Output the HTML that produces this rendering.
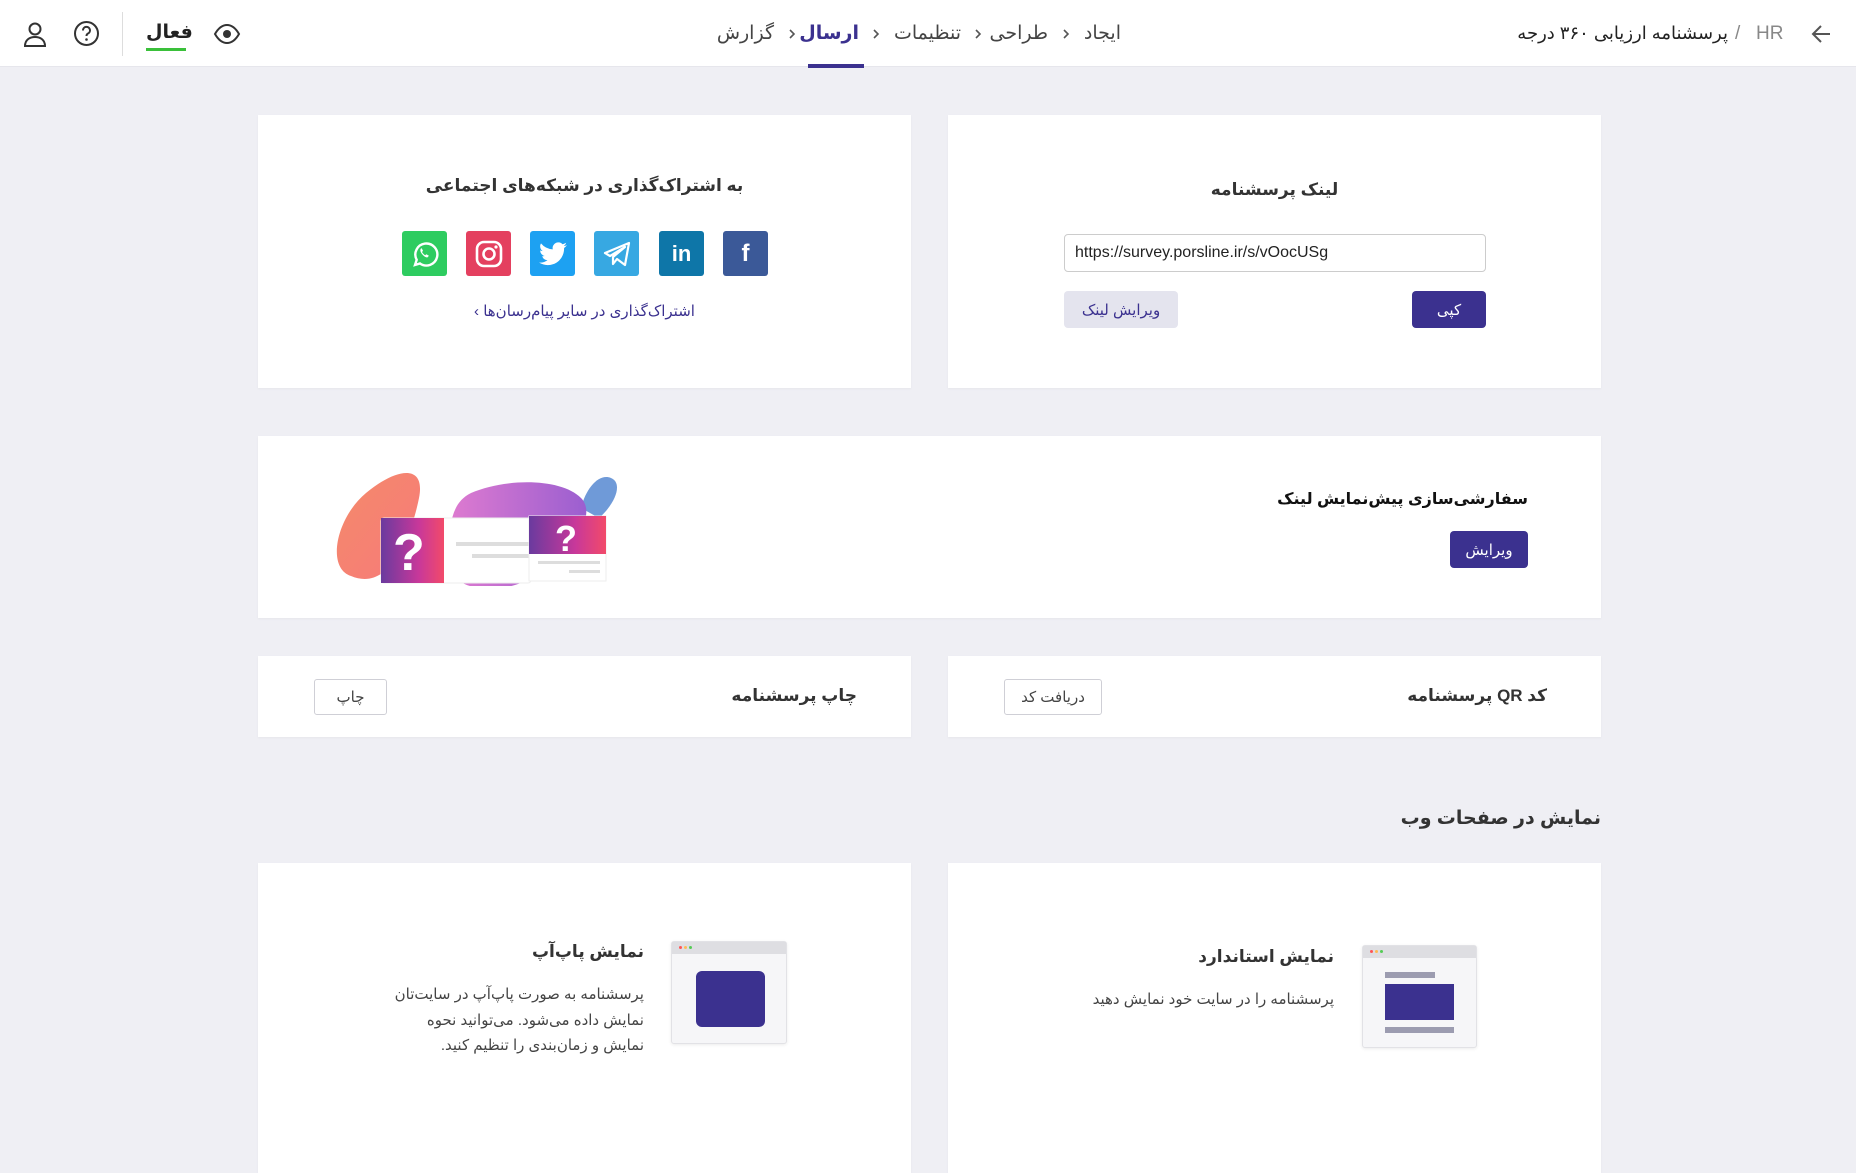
<!DOCTYPE html>
<html><head><meta charset="utf-8">
<style>
*{box-sizing:border-box;margin:0;padding:0}
body{width:1856px;height:1160px;overflow:hidden;background:#efeff4;font-family:"Liberation Sans","DejaVu Sans",sans-serif;color:#333;position:relative}
.a{position:absolute}
.r{direction:rtl;white-space:nowrap}
.card{position:absolute;background:#fff;box-shadow:0 1px 2px rgba(0,0,0,.04)}
.hdr{position:absolute;left:0;top:0;width:1856px;height:67px;background:#fff;border-bottom:1px solid #e6e6ec}
.btnp{position:absolute;background:#3b318f;color:#fff;border-radius:4px;font-size:15px;display:flex;align-items:center;justify-content:center;direction:rtl}
.btno{position:absolute;background:#fff;border:1px solid #cfcfd6;color:#444;border-radius:3px;font-size:15px;display:flex;align-items:center;justify-content:center;direction:rtl}
.soc{position:absolute;top:231px;width:45px;height:45px;border-radius:3px;display:flex;align-items:center;justify-content:center}
.ttl{font-weight:bold;font-size:17px;color:#333}
.chev{position:absolute;top:28px}
</style></head><body>
<div class="hdr"></div>
<svg class="a" style="left:1810px;top:23px" width="22" height="22" viewBox="0 0 22 22"><path d="M3 11h17M11 3l-8 8 8 8" fill="none" stroke="#555" stroke-width="2"/></svg>
<div class="a" style="left:1756px;top:23px;font-size:19px;color:#888">HR</div>
<div class="a" style="left:1735px;top:23px;font-size:19px;color:#888">/</div>
<div class="a r" style="right:128px;top:23px;font-size:18px;color:#222">پرسشنامه ارزیابی ۳۶۰ درجه</div>
<div class="a r" style="right:735px;top:22px;font-size:19px;color:#444">ایجاد</div>
<svg class="chev" style="left:1062px" width="8" height="12" viewBox="0 0 8 12"><path d="M2 2l4 4-4 4" fill="none" stroke="#555" stroke-width="1.6"/></svg>
<div class="a r" style="right:808px;top:22px;font-size:19px;color:#444">طراحی</div>
<svg class="chev" style="left:974px" width="8" height="12" viewBox="0 0 8 12"><path d="M2 2l4 4-4 4" fill="none" stroke="#555" stroke-width="1.6"/></svg>
<div class="a r" style="right:895px;top:22px;font-size:19px;color:#444">تنظیمات</div>
<svg class="chev" style="left:872px" width="8" height="12" viewBox="0 0 8 12"><path d="M2 2l4 4-4 4" fill="none" stroke="#555" stroke-width="1.6"/></svg>
<div class="a r" style="right:997px;top:22px;font-size:19px;color:#3b318f;font-weight:bold">ارسال</div>
<div class="a" style="left:808px;top:64px;width:56px;height:4px;background:#3b318f"></div>
<svg class="chev" style="left:788px" width="8" height="12" viewBox="0 0 8 12"><path d="M2 2l4 4-4 4" fill="none" stroke="#555" stroke-width="1.6"/></svg>
<div class="a r" style="right:1082px;top:22px;font-size:19px;color:#444">گزارش</div>
<svg class="a" style="left:213px;top:21px" width="28" height="26" viewBox="0 0 28 26"><path d="M2 13C6 6 10 4 14 4s8 2 12 9c-4 7-8 9-12 9S6 20 2 13z" fill="none" stroke="#333" stroke-width="2"/><circle cx="14" cy="13" r="4" fill="#333"/></svg>
<div class="a r" style="left:146px;top:21px;font-size:19px;color:#222;font-weight:bold">فعال</div>
<div class="a" style="left:146px;top:48px;width:40px;height:3px;background:#3ac03a"></div>
<div class="a" style="left:122px;top:12px;width:1px;height:44px;background:#ddd"></div>
<svg class="a" style="left:73px;top:20px" width="27" height="27" viewBox="0 0 27 27"><circle cx="13.5" cy="13.5" r="11.5" fill="none" stroke="#333" stroke-width="2"/><path d="M10 10.5a3.5 3.5 0 1 1 5 3c-1.2.6-1.5 1.3-1.5 2.5" fill="none" stroke="#333" stroke-width="2"/><circle cx="13.5" cy="19.5" r="1.3" fill="#333"/></svg>
<svg class="a" style="left:22px;top:20px" width="26" height="28" viewBox="0 0 26 28"><circle cx="13" cy="9" r="5.5" fill="none" stroke="#333" stroke-width="2"/><path d="M3 26c0-6 4.5-9 10-9s10 3 10 9z" fill="none" stroke="#333" stroke-width="2"/></svg>

<div class="card" style="left:258px;top:115px;width:653px;height:273px"></div>
<div class="card" style="left:948px;top:115px;width:653px;height:273px"></div>
<div class="a r ttl" style="left:258px;width:653px;text-align:center;top:176px">به اشتراک‌گذاری در شبکه‌های اجتماعی</div>
<div class="soc" style="left:402px;background:#2ecc60"><svg width="32" height="32" viewBox="0 0 32 32"><path d="M6 27l1.7-5.2A11 11 0 1 1 11 25.5z" fill="none" stroke="#fff" stroke-width="2.4"/><path d="M12 10.5c-1 1 -1 3 1 5.5s4.5 4 5.7 3.2l1.2-1.5-2.5-1.5-1.2 1c-1.2-.5-2.6-2-3.1-3.2l.9-1.2-1.3-2.6z" fill="#fff"/></svg></div>
<div class="soc" style="left:466px;background:#e4405f"><svg width="30" height="30" viewBox="0 0 30 30"><rect x="3" y="3" width="24" height="24" rx="7" fill="none" stroke="#fff" stroke-width="2.6"/><circle cx="15" cy="15" r="5.5" fill="none" stroke="#fff" stroke-width="2.6"/><circle cx="22" cy="8" r="1.6" fill="#fff"/></svg></div>
<div class="soc" style="left:530px;background:#1da1f2"><svg width="28" height="24" viewBox="0 0 24 20"><path d="M24 2.4a9.8 9.8 0 0 1-2.8.8A4.9 4.9 0 0 0 23.3.4a9.8 9.8 0 0 1-3.1 1.2A4.9 4.9 0 0 0 11.8 6 14 14 0 0 1 1.7.9a4.9 4.9 0 0 0 1.5 6.6A4.9 4.9 0 0 1 1 6.9a4.9 4.9 0 0 0 3.9 4.8 4.9 4.9 0 0 1-2.2.1 4.9 4.9 0 0 0 4.6 3.4A9.9 9.9 0 0 1 0 17.300 14 14 0 0 0 7.5 19.5c9 0 14-7.5 14-14v-.6A10 10 0 0 0 24 2.4z" fill="#fff"/></svg></div>
<div class="soc" style="left:594px;background:#37a8e2"><svg width="30" height="28" viewBox="0 0 30 28"><path d="M3 13L27 3l-4 22-8-6-4 5v-7l12-10-15 9z" fill="none" stroke="#fff" stroke-width="2.2" stroke-linejoin="round"/></svg></div>
<div class="soc" style="left:659px;background:#0e76a8;color:#fff;font-weight:bold;font-size:22px">in</div>
<div class="soc" style="left:723px;background:#3b5998;color:#fff;font-weight:bold;font-size:24px">f</div>
<div class="a r" style="left:258px;width:653px;text-align:center;top:302px;font-size:15px;color:#3b318f">اشتراک‌گذاری در سایر پیام‌رسان‌ها ›</div>

<div class="a r ttl" style="left:948px;width:653px;text-align:center;top:180px">لینک پرسشنامه</div>
<div class="a" style="left:1064px;top:234px;width:422px;height:38px;border:1px solid #ccc;border-radius:4px;font-size:16px;color:#222;padding:9px 10px">https://survey.porsline.ir/s/vOocUSg</div>
<div class="btnp" style="left:1412px;top:291px;width:74px;height:37px">کپی</div>
<div class="a r" style="left:1064px;top:291px;width:114px;height:37px;background:#e4e4ee;border-radius:4px;color:#3b318f;font-size:15px;display:flex;align-items:center;justify-content:center">ویرایش لینک</div>

<div class="card" style="left:258px;top:436px;width:1343px;height:182px"></div>
<div class="a r ttl" style="right:328px;top:489px;font-size:16px;color:#111">سفارشی‌سازی پیش‌نمایش لینک</div>
<div class="btnp" style="left:1450px;top:531px;width:78px;height:37px">ویرایش</div>
<svg class="a" style="left:331px;top:468px" width="290" height="118" viewBox="0 0 290 118">
<defs>
<linearGradient id="g1" x1="0" y1="0" x2="1" y2="1"><stop offset="0" stop-color="#f48a6a"/><stop offset="1" stop-color="#f77a7a"/></linearGradient>
<linearGradient id="g2" x1="0" y1="0" x2="1" y2="0"><stop offset="0" stop-color="#e07bd0"/><stop offset="1" stop-color="#9b5fd0"/></linearGradient>
<linearGradient id="g3" x1="0" y1="0" x2="1" y2="0"><stop offset="0" stop-color="#6a3a9e"/><stop offset=".6" stop-color="#c8389a"/><stop offset="1" stop-color="#f24a6a"/></linearGradient>
</defs>
<path d="M250 40c5-20 18-35 30-30s5 25-12 40z" fill="#6f9ad8"/>
<path d="M20 108C-5 100 5 50 35 25S95 -5 88 30 60 125 20 108z" fill="url(#g1)"/>
<path d="M140 25c35-15 90-15 110 5s-20 70-60 85-80 0-75-30 5-50 25-60z" fill="url(#g2)"/>
<rect x="50" y="50" width="150" height="65" rx="3" fill="#fff" stroke="#eee"/>
<rect x="50" y="50" width="63" height="65" fill="url(#g3)"/>
<text x="62" y="102" font-family="Liberation Sans" font-weight="bold" font-size="52" fill="#fff">?</text>
<rect x="125" y="74" width="75" height="4" fill="#ddd"/><rect x="141" y="86" width="59" height="4" fill="#ddd"/>
<rect x="198" y="48" width="77" height="65" fill="#fff" stroke="#eee"/>
<rect x="198" y="48" width="77" height="38" fill="url(#g3)"/>
<text x="224" y="83" font-family="Liberation Sans" font-weight="bold" font-size="36" fill="#fff">?</text>
<rect x="207" y="93" width="62" height="3" fill="#ddd"/><rect x="238" y="102" width="31" height="3" fill="#ddd"/>
</svg>

<div class="card" style="left:258px;top:656px;width:653px;height:81px"></div>
<div class="card" style="left:948px;top:656px;width:653px;height:81px"></div>
<div class="a r ttl" style="right:309px;top:686px">کد QR پرسشنامه</div>
<div class="btno" style="left:1004px;top:679px;width:98px;height:36px">دریافت کد</div>
<div class="a r ttl" style="right:999px;top:686px">چاپ پرسشنامه</div>
<div class="btno" style="left:314px;top:679px;width:73px;height:36px">چاپ</div>

<div class="a r ttl" style="right:255px;top:807px;font-size:19px;color:#333">نمایش در صفحات وب</div>

<div class="card" style="left:258px;top:863px;width:653px;height:310px"></div>
<div class="card" style="left:948px;top:863px;width:653px;height:310px"></div>
<div class="a" style="left:1362px;top:945px;width:115px;height:103px;background:#f6f6f8;border:1px solid #e2e2e6;border-radius:3px;box-shadow:0 1px 3px rgba(0,0,0,.08)">
 <div style="height:12px;background:#dedee2;position:relative"><span style="position:absolute;left:7px;top:4px;width:3px;height:3px;background:#f55;border-radius:50%"></span><span style="position:absolute;left:12px;top:4px;width:3px;height:3px;background:#fb5;border-radius:50%"></span><span style="position:absolute;left:17px;top:4px;width:3px;height:3px;background:#5c5;border-radius:50%"></span></div>
 <div style="position:absolute;left:22px;top:26px;width:50px;height:6px;background:#9c9cb0"></div>
 <div style="position:absolute;left:22px;top:38px;width:69px;height:36px;background:#3b318f"></div>
 <div style="position:absolute;left:22px;top:81px;width:69px;height:6px;background:#9c9cb0"></div>
</div>
<div class="a r ttl" style="right:522px;top:947px">نمایش استاندارد</div>
<div class="a r" style="right:522px;top:990px;font-size:15px;color:#444">پرسشنامه را در سایت خود نمایش دهید</div>

<div class="a" style="left:671px;top:941px;width:116px;height:103px;background:#f6f6f8;border:1px solid #e2e2e6;border-radius:3px;box-shadow:0 1px 3px rgba(0,0,0,.08)">
 <div style="height:12px;background:#dedee2;position:relative"><span style="position:absolute;left:7px;top:4px;width:3px;height:3px;background:#f55;border-radius:50%"></span><span style="position:absolute;left:12px;top:4px;width:3px;height:3px;background:#fb5;border-radius:50%"></span><span style="position:absolute;left:17px;top:4px;width:3px;height:3px;background:#5c5;border-radius:50%"></span></div>
 <div style="position:absolute;left:24px;top:29px;width:69px;height:56px;background:#3b318f;border-radius:6px"></div>
</div>
<div class="a r ttl" style="right:1212px;top:942px">نمایش پاپ‌آپ</div>
<div class="a r" style="right:1212px;top:982px;font-size:15px;color:#444;line-height:25.5px;text-align:right">پرسشنامه به صورت پاپ‌آپ در سایت‌تان<br>نمایش داده می‌شود. می‌توانید نحوه<br>نمایش و زمان‌بندی را تنظیم کنید.</div>
</body></html>
